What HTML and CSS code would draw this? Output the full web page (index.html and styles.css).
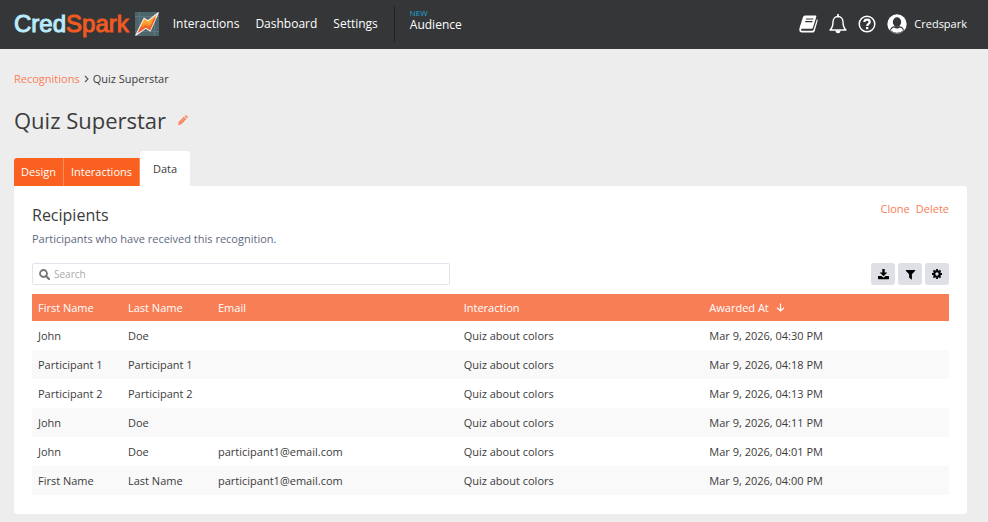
FILE: index.html
```html
<!DOCTYPE html>
<html lang="en">
<head>
<meta charset="UTF-8">
<meta name="viewport" content="width=device-width, initial-scale=1.0">
<title>Quiz Superstar - CredSpark</title>
<link rel="stylesheet" href="styles.css">
</head>
<body>
<header class="topbar">
    <a class="logo" href="#" aria-label="CredSpark">
        <span class="logo-cred">Cred</span><span class="logo-spark">Spark</span>
        <svg class="logo-mark" width="24" height="24" viewBox="0 0 24 24">
            <defs>
                <linearGradient id="bolt" x1="0" y1="0" x2="0" y2="1">
                    <stop offset="0" stop-color="#f5a63a"/>
                    <stop offset=".45" stop-color="#fba52f"/>
                    <stop offset=".75" stop-color="#f0572a"/>
                    <stop offset="1" stop-color="#e8503a"/>
                </linearGradient>
            </defs>
            <rect width="24" height="24" fill="#4d656c"/>
            <path d="M0 4.500h24M0 19.500h24M4.500 0v24M19.500 0v24" stroke="#5d767d" fill="none"/>
            <path d="M23.300 .7L13 8.800 9 6.200.8 23.300l9.900-7 4.600 2.600z" fill="url(#bolt)" stroke="#f6ece6" stroke-width="1.100" stroke-linejoin="round"/>
            <path d="M20 6L14.800 16.800l-4-2.500-5 3.800" fill="none" stroke="#f0602c" stroke-width="1.600"/>
        </svg>
    </a>
    <nav class="nav">
        <a href="#">Interactions</a>
        <a href="#">Dashboard</a>
        <a href="#">Settings</a>
        <a class="nav-new" href="#"><small>NEW</small>Audience</a>
    </nav>
    <div class="tools">
        <a href="#" aria-label="Guide">
            <svg width="19" height="18" viewBox="0 0 19 18">
                <path d="M6 0.500h10.500q1.200 0 .8 1.200L14 12.500q-.4 1.300-1.800 1.300H3.500q-1.600 0-1.500 1.100.1.900 1.500.9h9.700q1 0 1.300-1L18 4q1 .5.600 1.800L15.700 16q-.4 1.500-1.900 1.500H3Q.3 17.500.3 14.800q0-1.200.5-2.800L4 2Q4.500.500 6 .500z" fill="#fff"/>
                <path d="M7 4h7.300M6.200 6.700h7.300" stroke="#353638" stroke-width="1.200"/>
            </svg>
        </a>
        <a href="#" aria-label="Notifications">
            <svg width="18" height="20" viewBox="0 0 18 20">
                <path d="M9 2.500C5.800 2.500 4 5 4 8c0 4-1 6.300-3 8h16c-2-1.700-3-4-3-8 0-3-1.800-5.500-5-5.500z" fill="none" stroke="#fff" stroke-width="1.400" stroke-linejoin="round"/>
                <path d="M9 2.500V.7" stroke="#fff" stroke-width="1.800" stroke-linecap="round"/>
                <path d="M6.500 16.500h5a2.500 2.700 0 0 1-5 0z" fill="#fff"/>
            </svg>
        </a>
        <a href="#" aria-label="Help">
            <svg width="18" height="18" viewBox="0 0 18 18">
                <circle cx="9" cy="9" r="7.800" fill="none" stroke="#fff" stroke-width="1.500"/>
                <path d="M6.400 7C6.500 3.900 11.700 3.900 11.700 7c0 1.900-2.500 1.900-2.500 4" fill="none" stroke="#fff" stroke-width="2.200"/>
                <rect x="8" y="12" width="2.300" height="2.200" fill="#fff"/>
            </svg>
        </a>
        <a class="account" href="#">
            <svg width="20" height="20" viewBox="0 0 20 20">
                <circle cx="10" cy="10" r="9.700" fill="#fff"/>
                <ellipse cx="10" cy="8" rx="4.200" ry="4.700" fill="#353638"/>
                <path d="M3 16.300c.5-2.300 1.800-3.500 4-4h6c2.200.5 3.500 1.700 4 4a9.400 9.400 0 0 1-14 0z" fill="#353638"/>
                <path d="M4 16.500c.4-1.700 1.300-2.600 3-3 1.900 1.300 4.100 1.300 6 0 1.700.4 2.600 1.300 3 3a9 9 0 0 1-12 0z" fill="#fff"/>
            </svg>
            Credspark
        </a>
    </div>
</header>

<main class="page">
    <div class="breadcrumb">
        <a href="#">Recognitions</a>
        <svg width="5" height="8" viewBox="0 0 5 8"><path d="M1 1l3 3-3 3" fill="none" stroke="#555" stroke-width="1.100"/></svg>
        <span>Quiz Superstar</span>
    </div>

    <div class="title">
        <h1>Quiz Superstar</h1>
        <button class="edit" type="button" aria-label="Edit name">
            <svg width="10" height="10" viewBox="0 0 10 10">
                <path d="M0 10l.6-3L6 1.700 8.300 4 3 9.400z" fill="#fb7d56"/>
                <path d="M6.700 1l.6-.6q.5-.5 1 0L9.600 1.700q.5.500 0 1L9 3.300z" fill="#fb7d56"/>
                <path d="M1 7.400L2.600 9M3 6.800l3.600-3.600" stroke="#fbd0c2" stroke-width=".6"/>
            </svg>
        </button>
    </div>

    <nav class="tabs">
        <a class="tab" href="#">Design</a>
        <a class="tab" href="#">Interactions</a>
        <a class="tab active" href="#">Data</a>
    </nav>

    <section class="panel">
        <div class="panel-head">
            <div>
                <h2>Recipients</h2>
                <p>Participants who have received this recognition.</p>
            </div>
            <div class="panel-links">
                <a href="#">Clone</a>
                <a href="#">Delete</a>
            </div>
        </div>

        <div class="toolbar">
            <label class="search">
                <svg width="11" height="11" viewBox="0 0 11 11">
                    <circle cx="4.500" cy="4.500" r="3.500" fill="none" stroke="#777" stroke-width="1.800"/>
                    <path d="M7 7l3 3" stroke="#777" stroke-width="2.200" stroke-linecap="round"/>
                </svg>
                <input type="text" placeholder="Search" aria-label="Search">
            </label>
            <div class="actions">
                <button type="button" aria-label="Download">
                    <svg width="11" height="11" viewBox="0 0 11 11">
                        <path d="M4.300 0h2.400v3.500h2.600L5.500 7.300 1.700 3.500h2.600z"/>
                        <path d="M.6 7h2.900l2 1.800 2-1.800h2.900q.6 0 .6.600v2q0 .6-.6.600H.6q-.6 0-.6-.6v-2Q0 7 .6 7z"/>
                    </svg>
                </button>
                <button type="button" aria-label="Filter">
                    <svg width="11" height="11" viewBox="0 0 11 11">
                        <path d="M1 1h9q.5.500 0 1L6.900 5.200v5q-.3.500-.8.100L4.100 8.600V5.200L1 2q-.5-.5 0-1z"/>
                    </svg>
                </button>
                <button type="button" aria-label="Settings">
                    <svg width="10" height="10" viewBox="0 0 11 11">
                        <circle cx="5.500" cy="5.500" r="3" fill="none" stroke="#000" stroke-width="2.400"/>
                        <path d="M5.500 0v2M5.500 9v2M0 5.500h2M9 5.500h2M1.600 1.600L3 3M8 8l1.400 1.400M9.400 1.600L8 3M3 8L1.600 9.400" stroke="#000" stroke-width="2"/>
                    </svg>
                </button>
            </div>
        </div>

        <table class="recipients">
            <thead>
                <tr>
                    <th class="name">First Name</th>
                    <th class="name">Last Name</th>
                    <th>Email</th>
                    <th>Interaction</th>
                    <th>Awarded At
                        <svg class="sort" width="9" height="9" viewBox="0 0 9 9"><path d="M4.500 .5v7.500M1 4.700L4.500 8 8 4.700" fill="none" stroke="#fff" stroke-width="1.200"/></svg>
                    </th>
                </tr>
            </thead>
            <tbody>
                <tr>
                    <td>John</td>
                    <td>Doe</td>
                    <td></td>
                    <td>Quiz about colors</td>
                    <td>Mar 9, 2026, 04:30 PM</td>
                </tr>
                <tr>
                    <td>Participant 1</td>
                    <td>Participant 1</td>
                    <td></td>
                    <td>Quiz about colors</td>
                    <td>Mar 9, 2026, 04:18 PM</td>
                </tr>
                <tr>
                    <td>Participant 2</td>
                    <td>Participant 2</td>
                    <td></td>
                    <td>Quiz about colors</td>
                    <td>Mar 9, 2026, 04:13 PM</td>
                </tr>
                <tr>
                    <td>John</td>
                    <td>Doe</td>
                    <td></td>
                    <td>Quiz about colors</td>
                    <td>Mar 9, 2026, 04:11 PM</td>
                </tr>
                <tr>
                    <td>John</td>
                    <td>Doe</td>
                    <td>participant1@email.com</td>
                    <td>Quiz about colors</td>
                    <td>Mar 9, 2026, 04:01 PM</td>
                </tr>
                <tr>
                    <td>First Name</td>
                    <td>Last Name</td>
                    <td>participant1@email.com</td>
                    <td>Quiz about colors</td>
                    <td>Mar 9, 2026, 04:00 PM</td>
                </tr>
            </tbody>
        </table>
    </section>
</main>
</body>
</html>
```
FILE: styles.css
```css
* {
    box-sizing: border-box;
}
body {
    margin: 0;
    background-color: #ededed;
    color: #3c3c3c;
    font-family: "Open Sans", sans-serif;
    font-size: 11px;
    line-height: 16px;
}
a {
    color: #fb7d56;
    text-decoration: none;
}
svg {
    display: block;
    flex: none;
}
h1, h2, p {
    margin: 0;
    font-weight: normal;
}

/* Top bar */
.topbar {
    display: flex;
    align-items: center;
    height: 49px;
    padding: 0 21px 2px 14px;
    background-color: #353638;
}
.topbar a {
    color: #fff;
}
.logo {
    display: flex;
    align-items: center;
    margin-right: 14px;
    font-family: "Liberation Sans", sans-serif;
    font-size: 24px;
    line-height: 28px;
    -webkit-text-stroke: 1px;
}
.topbar .logo-cred {
    color: #baebfc;
}
.topbar .logo-spark {
    color: #f15a22;
}
.logo-mark {
    margin-left: 6px;
}
.nav {
    display: flex;
    align-items: center;
    gap: 16px;
    font-size: 12px;
}
.nav-new {
    display: flex;
    flex-direction: column;
    justify-content: flex-end;
    height: 36px;
    padding: 0 0 10px 15px;
    border-left: 1px solid #202123;
    line-height: 14px;
}
.nav-new small {
    color: #21a3dc;
    font-size: 8px;
    line-height: 10px;
}
.tools {
    display: flex;
    align-items: center;
    gap: 11px;
    margin-left: auto;
}
.account {
    display: flex;
    align-items: center;
    gap: 7px;
}

/* Page heading */
.page {
    padding: 22px 21px 7px 14px;
}
.breadcrumb {
    display: flex;
    align-items: center;
    gap: 4px;
}
.title {
    display: flex;
    align-items: center;
    gap: 12px;
    padding: 16px 0 14px;
}
h1 {
    font-size: 22px;
    line-height: 34px;
}
.edit {
    padding: 0;
    border: none;
    background: none;
    cursor: pointer;
}

/* Tabs */
.tabs {
    display: flex;
    align-items: flex-end;
}
.tab {
    padding: 6px 7px;
    border-right: 1px solid #fb8e5f;
    background-color: #fa6121;
    color: #fff;
}
.tab:first-child {
    border-top-left-radius: 3px;
}
.tab.active {
    padding: 10px 13px 9px;
    border-right: none;
    border-radius: 3px 3px 0 0;
    background-color: #fff;
    color: #3c3c3c;
}

/* Recipients */
.panel {
    padding: 15px 18px 19px;
    border-radius: 0 3px 3px 3px;
    background-color: #fff;
}
.panel-head {
    display: flex;
    justify-content: space-between;
}
h2 {
    font-size: 16px;
    line-height: 28px;
}
.panel-head p {
    padding-top: 2px;
    color: #5f6880;
}
.panel-links {
    display: flex;
    gap: 6px;
}
.toolbar {
    display: flex;
    justify-content: space-between;
    padding: 16px 0 9px;
}
.search {
    display: flex;
    align-items: center;
    gap: 4px;
    flex: 0 1 418px;
    height: 22px;
    padding: 0 6px;
    border: 1px solid #e3e5ec;
    border-radius: 2px;
}
.search input {
    flex: 1;
    min-width: 0;
    padding: 0;
    border: none;
    outline: none;
    font-family: inherit;
    font-size: 10px;
}
.search input::placeholder {
    color: #aaa;
}
.actions {
    display: flex;
    gap: 3px;
}
.actions button {
    display: flex;
    align-items: center;
    justify-content: center;
    width: 24px;
    height: 22px;
    padding: 0;
    border: none;
    border-radius: 3px;
    background-color: #dfe0e5;
    cursor: pointer;
}
.recipients {
    width: 100%;
    table-layout: fixed;
    border-collapse: collapse;
}
.recipients th,
.recipients td {
    height: 29px;
    padding: 0 6px;
    text-align: left;
}
.recipients th {
    height: 27px;
    background-color: #f87e56;
    color: #fff;
    font-weight: normal;
}
.recipients .name {
    width: 90px;
}
.recipients tbody tr:nth-child(even) {
    background-color: #f9f9f9;
}
.sort {
    display: inline-block;
    margin-left: 4px;
}
```
